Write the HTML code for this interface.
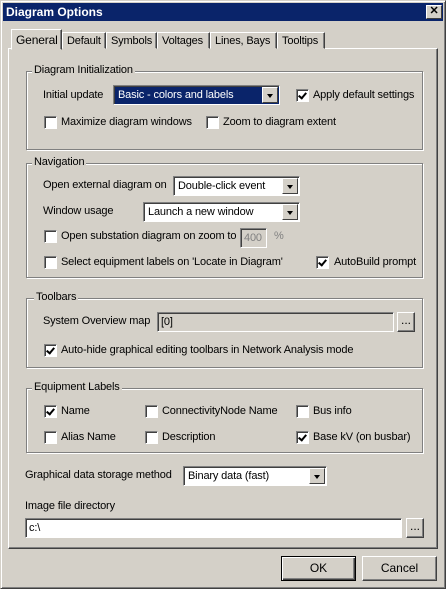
<!DOCTYPE html>
<html><head><style>
*{box-sizing:border-box;margin:0;padding:0}
body{width:446px;height:589px;background:#d4d0c8;font-family:"Liberation Sans",Arial,sans-serif;font-size:11px;letter-spacing:-0.15px;color:#000;position:relative;overflow:hidden}
.win{position:absolute;left:0;top:0;width:446px;height:589px;border:1px solid;border-color:#d4d0c8 #404040 #404040 #d4d0c8;box-shadow:inset 1px 1px #fff,inset -1px -1px #808080}
.title{position:absolute;left:3px;top:3px;width:440px;height:18px;background:#0a246a;color:#fff;font-weight:bold;font-size:12px;letter-spacing:0;padding:2px 0 0 3px}
.close{position:absolute;left:426px;top:5px;width:16px;height:14px;background:#d4d0c8;border:1px solid;border-color:#fff #404040 #404040 #fff;font-size:11px;font-weight:bold;text-align:center;line-height:11px;color:#000}
.panel{position:absolute;left:8px;top:48px;width:430px;height:501px;border:1px solid;border-color:#fff #404040 #404040 #fff;box-shadow:inset -1px -1px #808080}
.tab{position:absolute;top:32px;height:17px;border:1px solid;border-color:#fff #404040 transparent #fff;box-shadow:inset -1px 0 #808080;padding:2px 0 0 4px;font-size:11px;white-space:nowrap;overflow:hidden;background:#d4d0c8}
.tab.sel{top:29px;height:21px;z-index:2;padding-top:3px}
.grp{position:absolute;border:1px solid #808080;box-shadow:1px 1px #fff,inset 1px 1px #fff}
.gl{position:absolute;background:#d4d0c8;padding:0 2px;font-size:11px;white-space:nowrap}
.cb{position:absolute;width:13px;height:13px;background:#fff;border:1px solid;border-color:#808080 #fff #fff #808080;box-shadow:inset 1px 1px #404040}
.cb.on::after{content:"";position:absolute;left:3px;top:1px;width:3px;height:6px;border:solid #000;border-width:0 2px 2px 0;transform:rotate(40deg)}
.t{position:absolute;white-space:nowrap;font-size:11px}
.combo{position:absolute;height:20px;background:#fff;border:1px solid;border-color:#808080 #fff #fff #808080;box-shadow:inset 1px 1px #404040;padding:3px 0 0 4px;font-size:11px;white-space:nowrap}
.combo .btn{position:absolute;right:1px;top:1px;width:16px;height:16px;background:#d4d0c8;border:1px solid;border-color:#fff #404040 #404040 #fff}
.combo .btn::after{content:"";position:absolute;left:4px;top:6px;border:3.5px solid transparent;border-top:4px solid #000;border-bottom:0}
.inp{position:absolute;height:20px;border:1px solid;border-color:#808080 #fff #fff #808080;box-shadow:inset 1px 1px #404040;padding:3px 0 0 3px;font-size:11px}
.pb{position:absolute;background:#d4d0c8;border:1px solid;border-color:#fff #404040 #404040 #fff;box-shadow:inset -1px -1px #808080;text-align:center;font-size:12px;letter-spacing:0}
</style></head><body>
<div class="win"></div>
<div class="title">Diagram Options</div>
<div class="close">✕</div>
<div class="panel"></div>
<div class="tab sel" style="left:11px;width:51px;font-size:12px">General</div>
<div class="tab" style="left:62px;width:44px">Default</div>
<div class="tab" style="left:106px;width:51px">Symbols</div>
<div class="tab" style="left:157px;width:53px">Voltages</div>
<div class="tab" style="left:210px;width:67px">Lines, Bays</div>
<div class="tab" style="left:277px;width:48px">Tooltips</div>

<div class="grp" style="left:26px;top:71px;width:397px;height:79px"></div>
<div class="gl" style="left:32px;top:64px">Diagram Initialization</div>
<div class="t" style="left:43px;top:89px">Initial update</div>
<div class="combo" style="left:113px;top:85px;width:167px;background:#0a246a;color:#fff">Basic - colors and labels<div class="btn"></div></div>
<div class="cb on" style="left:296px;top:89px"></div><div class="t" style="left:313px;top:89px">Apply default settings</div>
<div class="cb" style="left:44px;top:116px"></div><div class="t" style="left:61px;top:116px">Maximize diagram windows</div>
<div class="cb" style="left:206px;top:116px"></div><div class="t" style="left:223px;top:116px">Zoom to diagram extent</div>

<div class="grp" style="left:26px;top:163px;width:397px;height:115px"></div>
<div class="gl" style="left:32px;top:156px">Navigation</div>
<div class="t" style="left:43px;top:179px">Open external diagram on</div>
<div class="combo" style="left:173px;top:176px;width:127px">Double-click event<div class="btn"></div></div>
<div class="t" style="left:43px;top:205px">Window usage</div>
<div class="combo" style="left:143px;top:202px;width:157px">Launch a new window<div class="btn"></div></div>
<div class="cb" style="left:44px;top:230px"></div><div class="t" style="left:61px;top:230px">Open substation diagram on zoom to</div>
<div class="inp" style="left:240px;top:228px;width:27px;color:#808080">400</div><div class="t" style="left:274px;top:230px;color:#808080">%</div>
<div class="cb" style="left:44px;top:256px"></div><div class="t" style="left:61px;top:256px">Select equipment labels on 'Locate in Diagram'</div>
<div class="cb on" style="left:316px;top:256px"></div><div class="t" style="left:334px;top:256px">AutoBuild prompt</div>

<div class="grp" style="left:26px;top:298px;width:397px;height:70px"></div>
<div class="gl" style="left:34px;top:291px">Toolbars</div>
<div class="t" style="left:43px;top:315px">System Overview map</div>
<div class="inp" style="left:157px;top:312px;width:237px">[0]</div>
<div class="pb" style="left:397px;top:312px;width:18px;height:20px;line-height:14px">...</div>
<div class="cb on" style="left:44px;top:344px"></div><div class="t" style="left:61px;top:344px">Auto-hide graphical editing toolbars in Network Analysis mode</div>

<div class="grp" style="left:26px;top:388px;width:397px;height:65px"></div>
<div class="gl" style="left:32px;top:381px">Equipment Labels</div>
<div class="cb on" style="left:44px;top:405px"></div><div class="t" style="left:61px;top:405px">Name</div>
<div class="cb" style="left:145px;top:405px"></div><div class="t" style="left:162px;top:405px">ConnectivityNode Name</div>
<div class="cb" style="left:296px;top:405px"></div><div class="t" style="left:313px;top:405px">Bus info</div>
<div class="cb" style="left:44px;top:431px"></div><div class="t" style="left:61px;top:431px">Alias Name</div>
<div class="cb" style="left:145px;top:431px"></div><div class="t" style="left:162px;top:431px">Description</div>
<div class="cb on" style="left:296px;top:431px"></div><div class="t" style="left:313px;top:431px">Base kV (on busbar)</div>

<div class="t" style="left:25px;top:469px">Graphical data storage method</div>
<div class="combo" style="left:183px;top:466px;width:144px">Binary data (fast)<div class="btn"></div></div>
<div class="t" style="left:25px;top:500px">Image file directory</div>
<div class="inp" style="left:25px;top:518px;width:377px;background:#fff">c:\</div>
<div class="pb" style="left:406px;top:518px;width:18px;height:20px;line-height:14px">...</div>

<div class="pb" style="left:281px;top:556px;width:75px;height:25px;line-height:22px;border:1px solid #000;box-shadow:inset 1px 1px #fff,inset -1px -1px #404040,inset -2px -2px #808080">OK</div>
<div class="pb" style="left:362px;top:556px;width:75px;height:25px;line-height:22px">Cancel</div>
</body></html>
